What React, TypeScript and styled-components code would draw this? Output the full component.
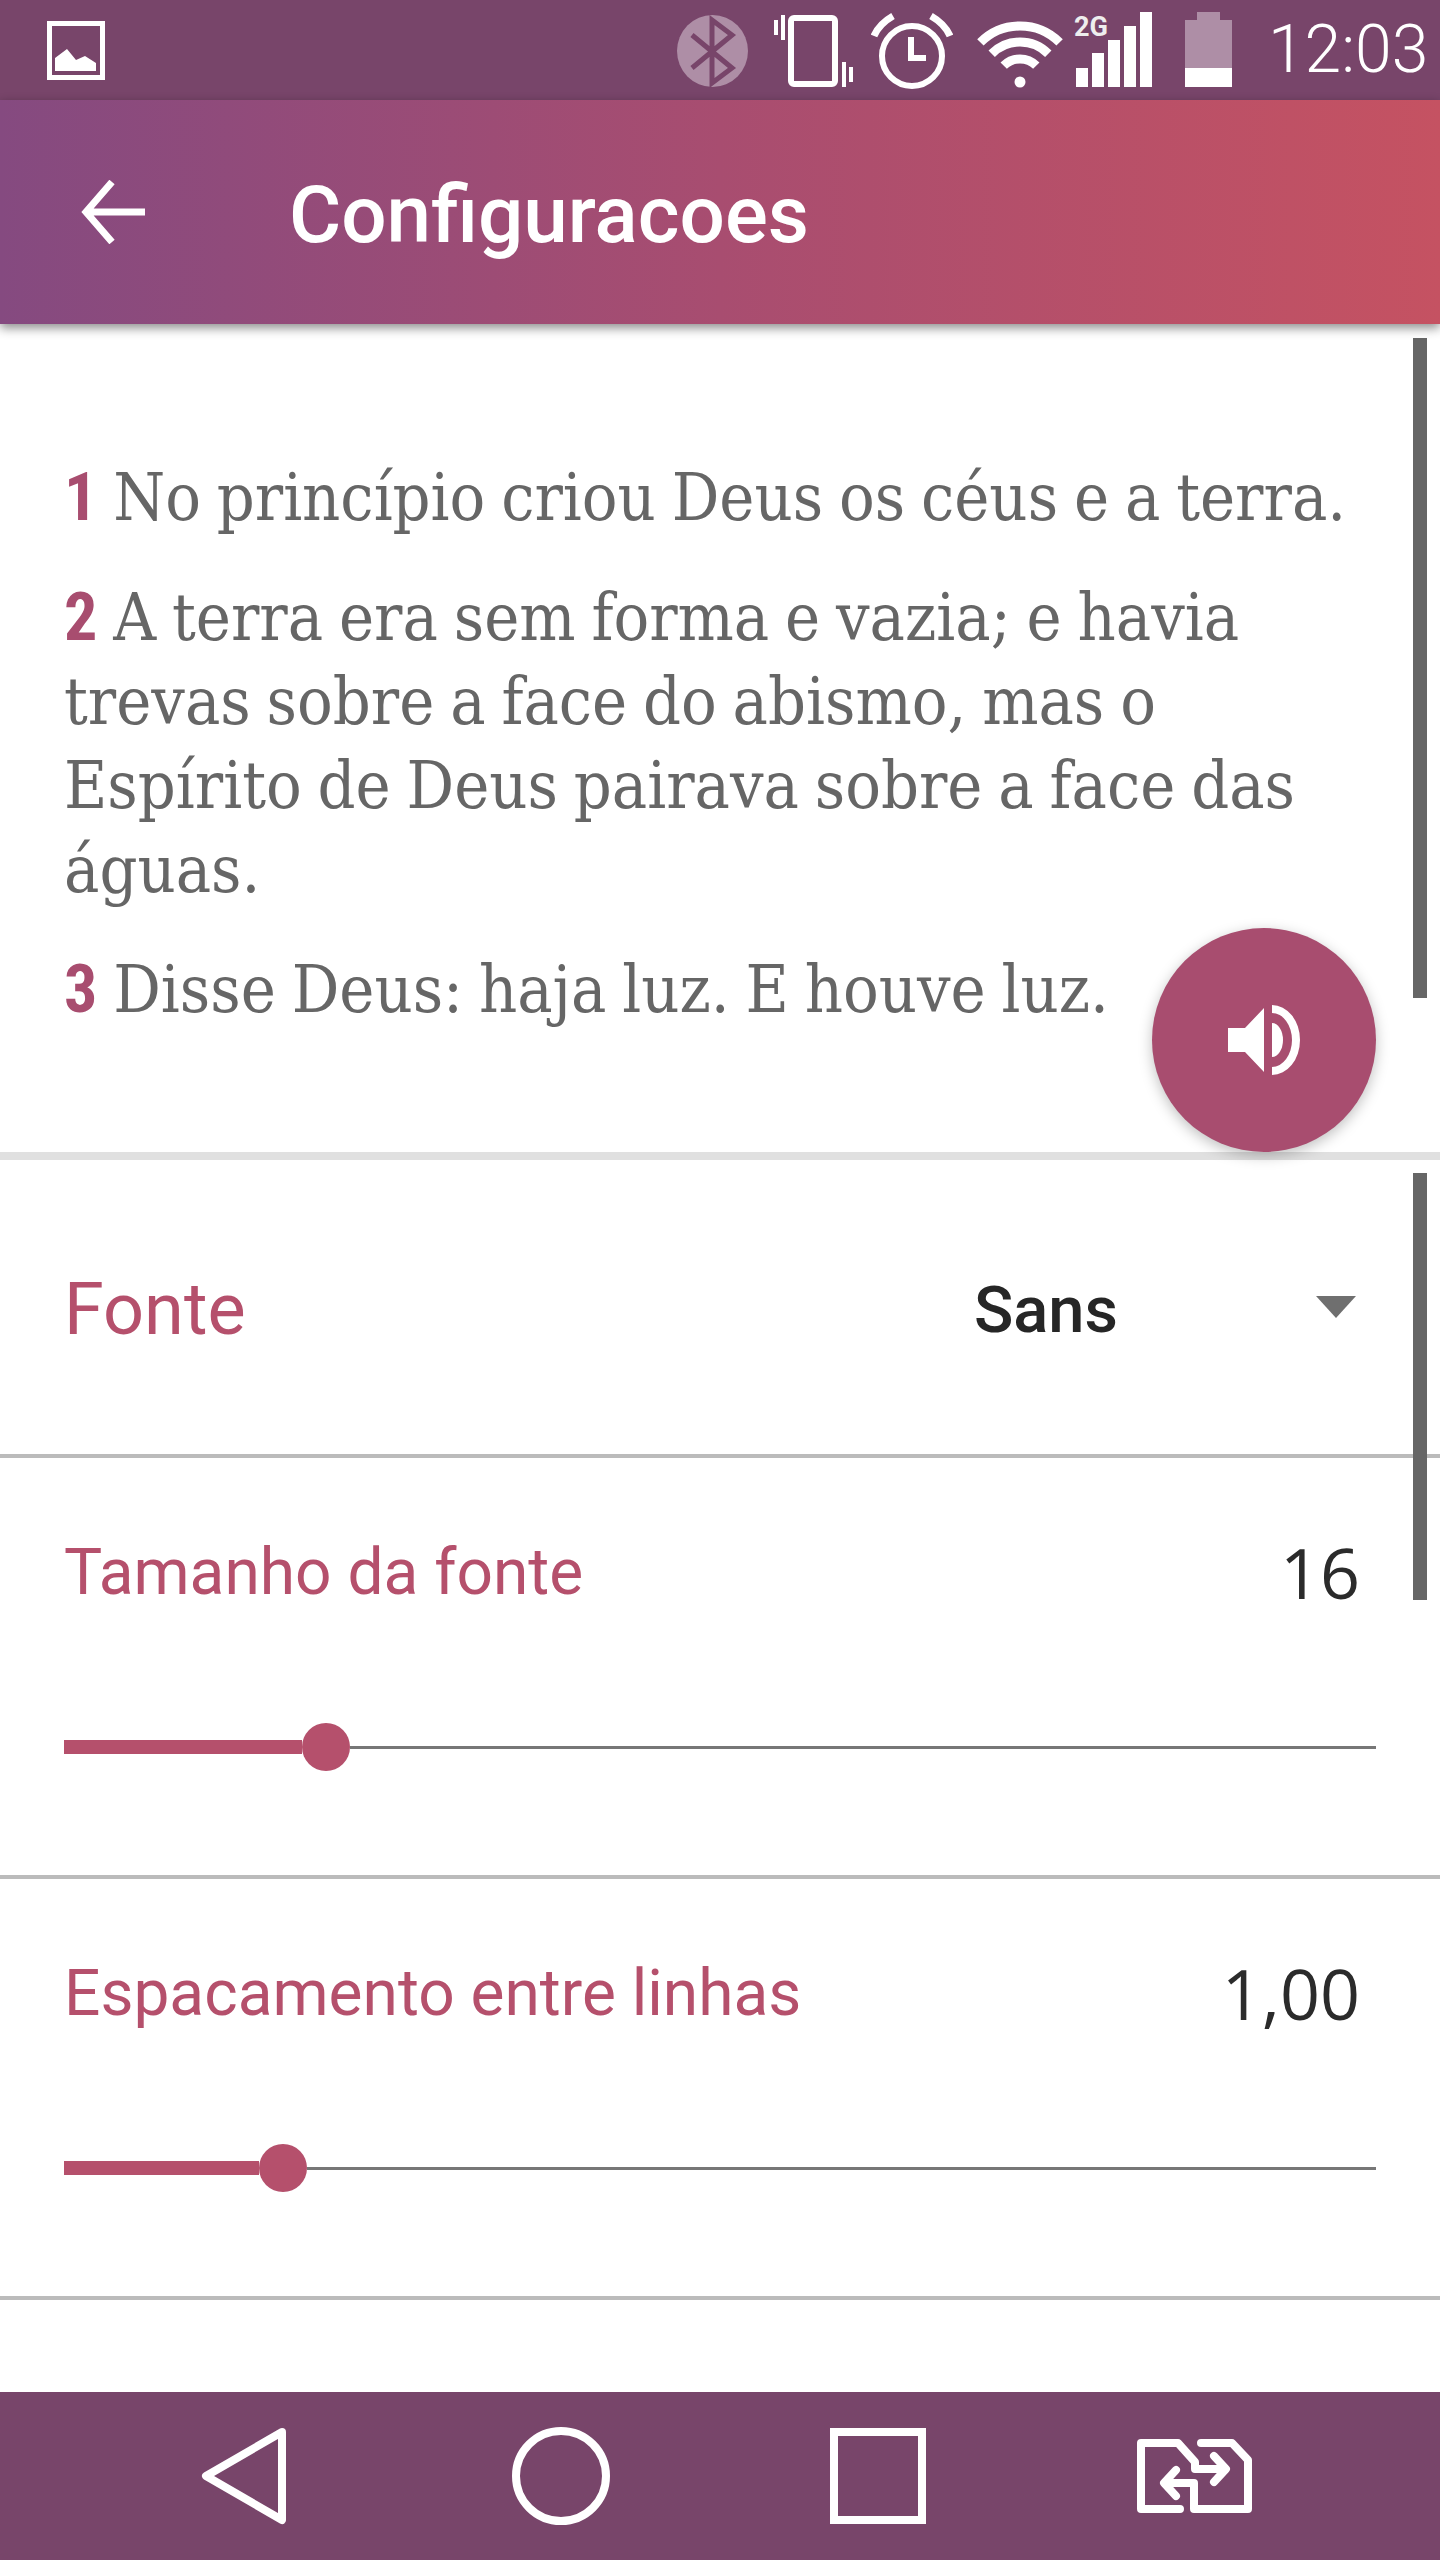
import React from "react";
import styled, { createGlobalStyle } from "styled-components";

const Global = createGlobalStyle`
  html, body { margin: 0; padding: 0; background: #fff; }
  body { font-family: Roboto, "Noto Sans", sans-serif; }
`;

const Screen = styled.div`
  width: 1440px;
  height: 2560px;
  display: flex;
  flex-direction: column;
  overflow: hidden;
  background: #fff;
`;

const StatusBar = styled.header`
  height: 100px;
  flex: none;
  background: #78456a;
  display: flex;
  align-items: center;
  color: #fff;
`;

const StatusIcon = styled.svg<{ $ml?: number }>`
  height: 100px;
  flex: none;
  display: block;
  margin-left: ${(p) => p.$ml ?? 0}px;
`;

const Spacer = styled.div`
  flex: 1;
`;

const Clock = styled.span`
  font-family: Roboto, sans-serif;
  font-weight: 300;
  font-size: 66px;
  line-height: 100px;
  width: 172px;
  margin-left: 36px;
  white-space: nowrap;
`;

const AppBar = styled.div`
  height: 224px;
  flex: none;
  position: relative;
  z-index: 2;
  display: flex;
  align-items: center;
  background: linear-gradient(90deg, #854a80 0%, #a84d70 50%, #c55262 100%);
  box-shadow: 0 4px 10px rgba(0, 0, 0, 0.45);
`;

const BackIcon = styled.svg`
  width: 65px;
  height: 64px;
  margin-left: 80px;
  flex: none;
`;

const Title = styled.h1`
  margin: 6px 0 0 144px;
  color: #fff;
  font-family: Roboto, sans-serif;
  font-weight: 500;
  font-size: 80px;
  line-height: 90px;
`;

const Preview = styled.section`
  height: 836px;
  flex: none;
  position: relative;
  box-sizing: border-box;
  padding: 132px 0 0 64px;
  border-bottom: 8px solid #e0e0e0;
`;

const Verse = styled.p`
  margin: 0 0 36px;
  font-family: "DejaVu Serif", "Liberation Serif", serif;
  font-stretch: condensed;
  font-size: 66px;
  word-spacing: -3px;
  line-height: 84px;
  color: #666;
  white-space: nowrap;
`;

const VerseNumber = styled.b`
  font-family: Roboto, sans-serif;
  color: #a84d6f;
  font-weight: 700;
`;

const ScrollThumb = styled.div<{ $top: number; $height: number }>`
  position: absolute;
  right: 13px;
  top: ${(p) => p.$top}px;
  width: 14px;
  height: ${(p) => p.$height}px;
  background: #666;
  z-index: 1;
`;

const Fab = styled.button`
  position: absolute;
  left: 1152px;
  top: 604px;
  width: 224px;
  height: 224px;
  border: 0;
  padding: 0;
  border-radius: 50%;
  background: #a84d6f;
  box-shadow: 0 4px 14px rgba(0, 0, 0, 0.25);
  display: flex;
  align-items: center;
  justify-content: center;
`;

const Settings = styled.section`
  flex: 1;
  position: relative;
  min-height: 0;
`;

const FontRow = styled.div`
  height: 288px;
  box-sizing: content-box;
  display: flex;
  align-items: center;
  padding: 6px 84px 0 64px;
  border-bottom: 4px solid #bbb;
`;

const FontLabel = styled.span`
  flex: 1;
  font-size: 72px;
  line-height: 90px;
  color: #b5506c;
`;

const FontValue = styled.span`
  font-size: 65px;
  font-weight: 500;
  line-height: 90px;
  color: #262626;
`;

const Caret = styled.svg`
  width: 40px;
  height: 22px;
  margin: 0 0 6px 198px;
  flex: none;
`;

const SliderRow = styled.div`
  box-sizing: content-box;
  height: 348px;
  padding: 69px 64px 0;
  border-bottom: 4px solid #bbb;
`;

const RowHeader = styled.div`
  display: flex;
  justify-content: space-between;
  align-items: center;
  height: 90px;
  padding-right: 16px;
`;

const RowLabel = styled.span`
  font-size: 64px;
  color: #b5506c;
`;

const RowValue = styled.span`
  font-family: "Open Sans", "Noto Sans", sans-serif;
  font-size: 70px;
  color: #2b2b2b;
`;

const Slider = styled.div`
  display: flex;
  align-items: center;
  height: 48px;
  margin-top: 106px;
`;

const SliderFill = styled.div`
  height: 14px;
  background: #b5506c;
  flex: none;
`;

const SliderThumb = styled.div`
  width: 48px;
  height: 48px;
  border-radius: 50%;
  background: #b5506c;
  flex: none;
`;

const SliderRest = styled.div`
  flex: 1;
  height: 3px;
  background: #777;
`;

const NavBar = styled.nav`
  height: 168px;
  flex: none;
  background: #78456a;
  display: grid;
  grid-template-columns: repeat(4, 317px);
  padding-left: 85px;
  justify-items: center;
  align-items: center;
`;

const NavIcon = styled.svg`
  height: 168px;
  width: 140px;
  display: block;
`;

const SliderControl = ({ fill }: { fill: number }) => (
  <Slider>
    <SliderFill style={{ width: fill }} />
    <SliderThumb />
    <SliderRest />
  </Slider>
);

export default function App() {
  return (
    <Screen>
      <Global />
      <StatusBar>
        <StatusIcon $ml={47} width={58} viewBox="47 0 58 100">
          <rect x="49.5" y="23.5" width="53" height="54" fill="none" stroke="#fff" strokeWidth="5" />
          <path d="M55 71V58L67 49L76 60L85 56L96 63V71Z" fill="#fff" />
        </StatusIcon>
        <Spacer />
        <StatusIcon width={71} viewBox="677 0 71 100">
          <ellipse cx="712.5" cy="51" rx="35.5" ry="36" fill="#ae8ea6" />
          <path d="M692 35L732 68L712 83V20L732 35L692 68" fill="none" stroke="#78456a" strokeWidth="5" />
        </StatusIcon>
        <StatusIcon $ml={26} width={80} viewBox="774 0 80 100">
          <rect x="791" y="18" width="44" height="66" rx="3" fill="none" stroke="#fff" strokeWidth="6" />
          <rect x="774" y="20" width="4" height="15" fill="#fff" />
          <rect x="781" y="15" width="4" height="25" fill="#fff" />
          <rect x="842" y="62" width="4" height="25" fill="#fff" />
          <rect x="849" y="67" width="4" height="15" fill="#fff" />
        </StatusIcon>
        <StatusIcon $ml={17} width={82} viewBox="871 0 82 100">
          <circle cx="912" cy="56" r="30" fill="none" stroke="#fff" strokeWidth="6" />
          <path d="M911 37V58H926" fill="none" stroke="#fff" strokeWidth="6" />
          <path d="M874 36Q879 24 893 16M931 16Q945 24 950 36" fill="none" stroke="#fff" strokeWidth="7" />
        </StatusIcon>
        <StatusIcon $ml={23} width={87} viewBox="976 0 87 100">
          <circle cx="1020" cy="82" r="5.5" fill="#fff" />
          <path
            d="M980.4 42.4A56 56 0 0 1 1059.6 42.4M991.7 53.7A40 40 0 0 1 1048.3 53.7M1003.7 65.7A23 23 0 0 1 1036.3 65.7"
            fill="none"
            stroke="#fff"
            strokeWidth="9"
          />
        </StatusIcon>
        <StatusIcon $ml={11} width={78} viewBox="1074 0 78 100">
          <rect x="1076" y="68" width="12" height="19" fill="#fff" />
          <rect x="1092" y="53" width="12" height="34" fill="#fff" />
          <rect x="1108" y="40" width="12" height="47" fill="#fff" />
          <rect x="1124" y="26" width="12" height="61" fill="#fff" />
          <rect x="1140" y="12" width="12" height="75" fill="#fff" />
          <text x="1074" y="36" fontFamily="Roboto, sans-serif" fontWeight="700" fontSize="27" fill="#eee" textLength="34" lengthAdjust="spacingAndGlyphs">2G</text>
        </StatusIcon>
        <StatusIcon $ml={33} width={47} viewBox="1185 0 47 100">
          <path d="M1197 12H1220V20H1232V68H1185V20H1197Z" fill="#ae8ea6" />
          <rect x="1185" y="68" width="47" height="19" fill="#fff" />
        </StatusIcon>
        <Clock>12:03</Clock>
      </StatusBar>

      <AppBar>
        <BackIcon viewBox="80 180 65 64">
          <path d="M145 212H86M112 182L86 212L112 242" fill="none" stroke="#fff" strokeWidth="7" />
        </BackIcon>
        <Title>Configuracoes</Title>
      </AppBar>

      <Preview>
        <Verse>
          <VerseNumber>1</VerseNumber> No princípio criou Deus os céus e a terra.
        </Verse>
        <Verse>
          <VerseNumber>2</VerseNumber> A terra era sem forma e vazia; e havia
          <br />
          trevas sobre a face do abismo, mas o
          <br />
          Espírito de Deus pairava sobre a face das
          <br />
          águas.
        </Verse>
        <Verse>
          <VerseNumber>3</VerseNumber> Disse Deus: haja luz. E houve luz.
        </Verse>
        <ScrollThumb $top={14} $height={660} />
        <Fab aria-label="Ouvir">
          <svg width="72" height="70" viewBox="1228 1005 72 70">
            <path d="M1228 1028H1245L1264 1008V1072L1245 1052H1228Z" fill="#fff" />
            <path d="M1272 1005A28 35 0 0 1 1272 1075V1067A20 27 0 0 0 1272 1013Z" fill="#fff" />
            <path d="M1272 1023A11 17 0 0 1 1272 1057Z" fill="#fff" />
          </svg>
        </Fab>
      </Preview>

      <Settings>
        <FontRow>
          <FontLabel>Fonte</FontLabel>
          <FontValue>Sans</FontValue>
          <Caret viewBox="0 0 40 22">
            <path d="M0 0H40L20 22Z" fill="#6f6f6f" />
          </Caret>
        </FontRow>
        <SliderRow>
          <RowHeader>
            <RowLabel>Tamanho da fonte</RowLabel>
            <RowValue>16</RowValue>
          </RowHeader>
          <SliderControl fill={238} />
        </SliderRow>
        <SliderRow>
          <RowHeader>
            <RowLabel>Espacamento entre linhas</RowLabel>
            <RowValue>1,00</RowValue>
          </RowHeader>
          <SliderControl fill={195} />
        </SliderRow>
        <ScrollThumb $top={13} $height={427} />
      </Settings>

      <NavBar>
        <NavIcon viewBox="174 2392 140 168">
          <path d="M282 2432L206 2476L282 2520Z" fill="none" stroke="#fff" strokeWidth="8" strokeLinejoin="round" />
        </NavIcon>
        <NavIcon viewBox="491 2392 140 168">
          <circle cx="561" cy="2476" r="45" fill="none" stroke="#fff" strokeWidth="8" />
        </NavIcon>
        <NavIcon viewBox="808 2392 140 168">
          <rect x="834" y="2432" width="88" height="88" fill="none" stroke="#fff" strokeWidth="8" />
        </NavIcon>
        <NavIcon viewBox="1125 2392 140 168">
          <path
            d="M1180 2509H1141V2443H1178L1195 2462V2469H1224M1214 2456L1226 2469L1214 2482M1201 2443H1232L1248 2460V2509H1194V2483H1166M1176 2470L1164 2483L1176 2496"
            fill="none"
            stroke="#fff"
            strokeWidth="8"
            strokeLinecap="round"
            strokeLinejoin="round"
          />
        </NavIcon>
      </NavBar>
    </Screen>
  );
}
